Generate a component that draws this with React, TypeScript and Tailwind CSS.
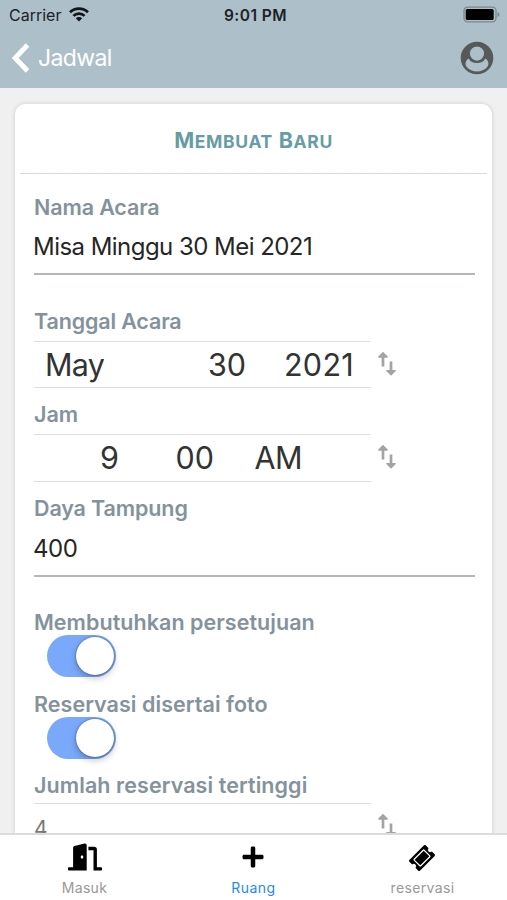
import type { ReactNode } from "react";
import { FaDoorOpen, FaPlus } from "react-icons/fa";

function Label({ children, className }: { children: ReactNode; className: string }) {
  return (
    <div className={`flex items-center whitespace-nowrap text-[21.5px] font-semibold text-[#84929c] ${className}`}>
      {children}
    </div>
  );
}

function SwapIcon() {
  return (
    <svg width="20" height="26" viewBox="0 0 20 26" fill="none" stroke="#a3a3a3" strokeWidth="2.7" className="mb-0.5 ml-[6px] shrink-0">
      <path d="M6 15.500V3" />
      <path d="M1 5.800 6 .8l5 5-.7.9H1.700z" fill="#a3a3a3" stroke="none" />
      <path d="M14 10.500V23" />
      <path d="M9 19.800 14 24.800l5-5-.7-.9H9.700z" fill="#a3a3a3" stroke="none" />
    </svg>
  );
}

function Toggle() {
  return (
    <div className="ml-[13px] flex h-[42px] w-[69px] items-center justify-end rounded-full bg-[#7aa9fb] pr-[2px]">
      <div className="size-[38px] rounded-full bg-white shadow-[0_3px_7px_rgba(0,0,0,0.25),0_0_2px_rgba(0,0,40,0.5)]" />
    </div>
  );
}

function TicketIcon() {
  return (
    <svg width="28" height="28" viewBox="0 0 28 28">
      <g transform="rotate(-45 14 14)">
        <path
          fill="#000"
          d="M3.600 6.500h20.800a1.200 1.200 0 0 1 1.200 1.200v4a2.300 2.300 0 0 0 0 4.600v4a1.200 1.200 0 0 1-1.200 1.200H3.600a1.200 1.200 0 0 1-1.200-1.200v-4a2.300 2.300 0 0 0 0-4.600v-4a1.200 1.200 0 0 1 1.200-1.200z"
        />
        <rect x="7" y="9.400" width="14" height="9.200" rx="0.600" fill="none" stroke="#fff" strokeWidth="1.200" />
      </g>
    </svg>
  );
}

export default function App() {
  return (
    <div className="flex h-[900px] w-[507px] flex-col overflow-hidden bg-[#f0f0f1] font-['Inter','Liberation_Sans',sans-serif]">
      <header className="h-[88px] shrink-0 bg-[#adbfc9]">
        <div className="grid h-[30px] grid-cols-3 items-center pl-[9px] pr-[7px] text-[15.5px] text-[#1b2227]">
          <div className="flex items-center gap-2">
            <span className="text-[16px]">Carrier</span>
            <svg width="20" height="15" viewBox="0 0 20 15" fill="none" stroke="#10161a" strokeWidth="2.700" className="mb-0.5">
              <path d="M1 5.300a13 13 0 0 1 18 0" />
              <path d="M4.400 8.900a8 8 0 0 1 11.200 0" />
              <path d="M10 14.500 6.800 11.300a4.600 4.600 0 0 1 6.400 0z" fill="#10161a" stroke="none" />
            </svg>
          </div>
          <div className="pl-0.5 pt-px text-center font-semibold tracking-[0.45px]">9:01 PM</div>
          <svg width="37" height="17" viewBox="0 0 37 17" className="mb-0.5 justify-self-end">
            <rect x="1" y="1.200" width="32" height="14.600" rx="3.500" fill="none" stroke="#7b8890" strokeWidth="1.300" />
            <rect x="2.700" y="3" width="28" height="11" rx="1.500" fill="#000" />
            <path d="M34.500 6v5q2-.6 2-2.500t-2-2.500z" fill="#7b8890" />
          </svg>
        </div>
        <div className="flex h-[55px] items-center pl-[11px] pr-[13px]">
          <svg width="20" height="30" viewBox="0 0 20 30" fill="none" stroke="#fff" strokeWidth="5">
            <path d="M16.500 2 4.200 15l12.300 13" />
          </svg>
          <span className="ml-[7px] pt-0.5 text-[23px] tracking-[-0.6px] text-white">Jadwal</span>
          <svg width="34" height="34" viewBox="0 0 34 34" className="ml-auto">
            <circle cx="17" cy="17" r="16.300" fill="#565859" />
            <path d="M8.800 17.500C5.200 19.500 4.800 23.500 6.800 26c4.700 5.900 15.700 5.900 20.400 0 2-2.500 1.600-6.500-2-8.500-1.500 3.400-4.400 4.600-8.200 4.600s-6.700-1.200-8.200-4.600z" fill="#adbfc9" />
            <circle cx="17" cy="12.600" r="7.700" fill="#adbfc9" stroke="#565859" strokeWidth="1.200" />
          </svg>
        </div>
      </header>

      <main className="min-h-0 flex-1 overflow-hidden px-[15px] pt-4">
        <section className="h-[760px] rounded-[10px] bg-white px-[5px] shadow-[0_0_4px_rgba(0,0,0,0.16)]">
          <h1 className="flex h-[70px] items-center justify-center border-b border-[#d9dadb] pt-[3px] text-[21.5px] font-bold tracking-[0.65px] text-[#669da4]">
            <span>
              M<span className="text-[17.500px]">EMBUAT</span> B<span className="text-[17.500px]">ARU</span>
            </span>
          </h1>
          <form className="pl-[14px] pr-[12px]">
            <Label className="h-[46px] pt-[21px] tracking-[-0.13px]">Nama Acara</Label>
            <div className="flex h-[55px] items-center border-b-2 border-[#b1b7ba] text-[24px] tracking-[-0.54px] text-[#262626]">
              <span className="-ml-px">Misa Minggu 30 Mei 2021</span>
            </div>
            <Label className="h-[66px] pt-[26px] tracking-[-0.15px]">Tanggal Acara</Label>
            <div className="flex items-center">
              <div className="flex h-[47px] w-[337px] items-center border-y border-[#dfdfe0] text-[30.5px] text-[#333]">
                <span className="ml-[11px] w-[117px]">
                  <span className="block h-[36px] w-max overflow-hidden leading-[36px] tracking-[-0.8px]">May</span>
                </span>
                <span className="w-[84px] text-right">30</span>
                <span className="w-[108px] text-right tracking-[0.3px]">2021</span>
              </div>
              <SwapIcon />
            </div>
            <Label className="h-[46px] pt-[7px]">Jam</Label>
            <div className="flex items-center">
              <div className="flex h-[48px] w-[337px] items-center border-y border-[#dfdfe0] text-[30.5px] text-[#333]">
                <span className="w-[85px] text-right">9</span>
                <span className="w-[95px] text-right">00</span>
                <span className="w-[88px] text-right tracking-[-0.6px]">AM</span>
              </div>
              <SwapIcon />
            </div>
            <Label className="h-[46px] pt-[7px] tracking-[-0.13px]">Daya Tampung</Label>
            <div className="flex h-[49px] items-center border-b-2 border-[#b1b7ba] pb-[6px] text-[24px] tracking-[-0.5px] text-[#262626]">
              <span className="-ml-px">400</span>
            </div>
            <Label className="h-[58px] pt-[32px] tracking-[0.04px]">Membutuhkan persetujuan</Label>
            <Toggle />
            <Label className="h-[40px] pt-[14px] tracking-[0.05px]">Reservasi disertai foto</Label>
            <Toggle />
            <Label className="h-[44px] pt-[9px] tracking-[0.08px]">Jumlah reservasi tertinggi</Label>
            <div className="flex items-center">
              <div className="flex h-[47px] w-[337px] items-center border-y border-[#dfdfe0] pt-1 text-[21px] text-[#777]">4</div>
              <SwapIcon />
            </div>
          </form>
        </section>
      </main>

      <nav className="grid h-[67px] shrink-0 grid-cols-3 border-t-2 border-[#dcdcdc] bg-white text-[14px] text-[#999]">
        <div className="flex flex-col items-center tracking-[0.3px]">
          <div className="flex h-[42px] items-center pt-0.5">
            <FaDoorOpen size={34} color="#000" />
          </div>
          <span>Masuk</span>
        </div>
        <div className="flex flex-col items-center tracking-[0.45px] text-[#2689f5]">
          <div className="flex h-[42px] items-center pr-0.5 pt-px">
            <FaPlus size={24} color="#000" />
          </div>
          <span>Ruang</span>
        </div>
        <div className="flex flex-col items-center tracking-[0.35px]">
          <div className="flex h-[42px] items-center pt-[3px] pr-0.5">
            <TicketIcon />
          </div>
          <span>reservasi</span>
        </div>
      </nav>
    </div>
  );
}
